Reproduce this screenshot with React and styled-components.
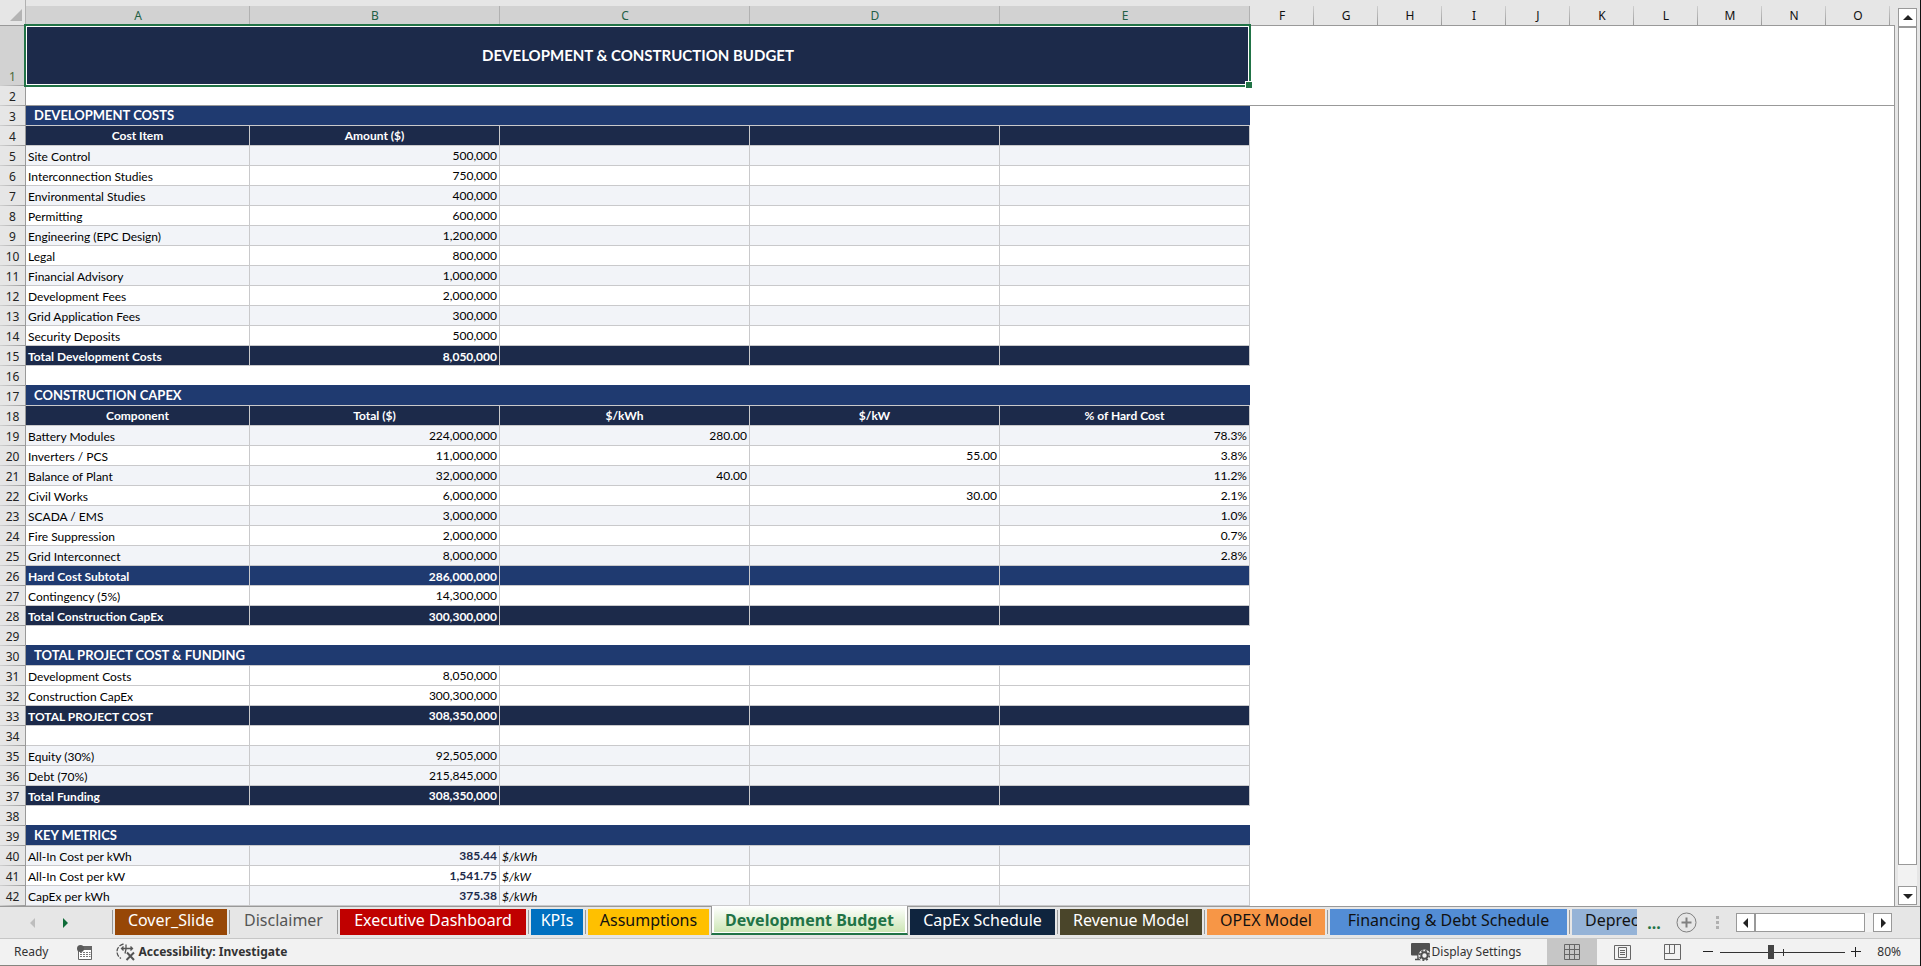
import React, { useState } from 'react';
import styled, { createGlobalStyle, css } from 'styled-components';

const NAVY = '#1c2a4a';
const BLUE = '#1f3a70';
const STRIPE = '#f2f4f8';
const GREEN = '#217346';
const LINE = '#c9c9cb';
const EDGE = '#999999';

const GlobalStyle = createGlobalStyle`
  * {
    box-sizing: border-box;
  }

  body {
    margin: 0;
    background: #e6e6e6;
    color: #222;
    font-family: 'Noto Sans', 'Open Sans', sans-serif;
    font-size: 12px;
  }

  button {
    padding: 0;
    border: none;
    background: transparent;
    color: inherit;
    font: inherit;
    cursor: pointer;
  }
`;

const Window = styled.div`
  display: flex;
  flex-direction: column;
  height: 100vh;
  overflow: hidden;
  border-right: 1px solid #111;
`;

const Workspace = styled.main`
  display: flex;
  flex: 1;
  min-height: 0;
`;

const GridPane = styled.div`
  flex: 1;
  min-width: 0;
  overflow: hidden;
`;

const Sheet = styled.table`
  width: 100%;
  table-layout: fixed;
  border-collapse: separate;
  border-spacing: 0;
`;

const Col = styled.col`
  width: ${props => (props.$width ? `${props.$width}px` : 'auto')};
`;

const HeadCell = styled.th`
  height: 26px;
  padding: 6px 0 0;
  border-bottom: 1px solid ${EDGE};
  background: linear-gradient(to bottom, #cfcfcf, #9b9b9b) right bottom / 1px 19px no-repeat;
  color: #111;
  font-weight: 400;
  line-height: 18px;
  text-align: center;

  ${props => props.$selected && css`
    background:
      linear-gradient(#b1b1b1, #b1b1b1) right bottom / 1px 19px no-repeat,
      linear-gradient(#d2d2d2, #d2d2d2) left bottom / 100% 19px no-repeat;
    color: #235f45;
  `}

  ${props => props.$plain && css`
    background: none;
  `}
`;

const Corner = styled.th`
  height: 26px;
  padding: 5px 3px 0 0;
  border-right: 1px solid #b1b1b1;
  border-bottom: 1px solid ${EDGE};
  line-height: 0;
  text-align: right;
`;

const RowHead = styled.th`
  padding: 0;
  border-right: 1px solid ${EDGE};
  background: linear-gradient(to right, #d0d0d0, #9b9b9b) left bottom / 100% 1px no-repeat
    ${props => (props.$selected ? '#d2d2d2' : '#e6e6e6')};
  color: ${props => (props.$selected ? '#4c6b3a' : '#222')};
  font-weight: 400;
  line-height: 18px;
  text-align: center;
  vertical-align: bottom;
`;

const Row = styled.tr`
  height: ${props => (props.$tall ? '60px' : '20px')};
`;

const fills = {
  head: NAVY,
  total: NAVY,
  subtotal: BLUE,
  stripe: STRIPE,
  plain: '#fff',
};

const Cell = styled.td`
  padding: 0 2px;
  border-right: 1px solid ${LINE};
  border-bottom: 1px solid ${LINE};
  background: ${props => fills[props.$kind]};
  color: ${props => (['head', 'total', 'subtotal'].includes(props.$kind) ? '#fff' : '#000')};
  font-family: Lato, Carlito, sans-serif;
  font-size: 12px;
  font-weight: ${props => (['head', 'total', 'subtotal'].includes(props.$kind) ? 700 : 400)};
  line-height: 17px;
  text-align: ${props => props.$align};
  vertical-align: ${props => (props.$low ? 'bottom' : 'middle')};
  white-space: nowrap;

  ${props => props.$metric && css`
    color: ${NAVY};
    font-weight: 700;
  `}

  ${props => props.$unit && css`
    font-style: italic;
  `}
`;

const TitleCell = styled.td`
  position: relative;
  padding: 0 0 2px;
  background: ${NAVY};
  color: #fff;
  font-family: Lato, Carlito, sans-serif;
  font-size: 15px;
  font-weight: 700;
  line-height: 20px;
  text-align: center;
`;

const Selection = styled.span`
  position: absolute;
  inset: -2px -1px -1px -2px;
  border: 2px solid ${GREEN};
  box-shadow: inset 0 0 0 1px #fff;
  pointer-events: none;

  &::after {
    content: '';
    position: absolute;
    right: -3px;
    bottom: -3px;
    width: 6px;
    height: 6px;
    border: solid #fff;
    border-width: 1px 0 0 1px;
    background: ${GREEN};
  }
`;

const SectionCell = styled.td`
  padding: 0 8px;
  border-bottom: 1px solid ${LINE};
  background: ${BLUE};
  color: #fff;
  font-family: Lato, Carlito, sans-serif;
  font-size: 13px;
  font-weight: 700;
  line-height: 17px;
`;

const GapCell = styled.td`
  padding: 0;
  border-bottom: 1px solid ${props => (props.$frozen ? EDGE : BLUE)};
  background: #fff;
`;

const BlankCell = styled.td`
  padding: 0;
  border-right: 1px solid ${EDGE};
  background: #fff;

  ${props => props.$frozen && css`
    border-bottom: 1px solid ${EDGE};
  `}
`;

const VerticalBar = styled.div`
  display: flex;
  flex-direction: column;
  width: 25px;
  padding: 8px 3px 1px;
`;

const VerticalTrack = styled.div`
  display: flex;
  flex: 1;
  flex-direction: column;
  padding-bottom: 21px;
  background: #f2f2f2;
`;

const ScrollButton = styled.button`
  display: flex;
  align-items: center;
  justify-content: center;
  width: 19px;
  height: 19px;
  border: 1px solid ${EDGE};
  background: #fff;
`;

const Thumb = styled.div`
  flex: 1;
  border: 1px solid ${EDGE};
  background: #fff;
`;

const TabBar = styled.div`
  display: flex;
  align-items: center;
  height: 33px;
  padding-right: 28px;
  border-top: 1px solid ${EDGE};
  border-bottom: 1px solid #c6c6c6;
`;

const TabArrows = styled.div`
  display: flex;
  gap: 18px;
  width: 110px;
  padding-left: 26px;
`;

const ArrowButton = styled.button`
  width: 14px;
  height: 20px;
  line-height: 0;
`;

const Tabs = styled.nav`
  display: flex;
  flex: 1;
  align-self: stretch;
  align-items: flex-start;
  min-width: 0;
  margin-top: -1px;
  overflow: hidden;
`;

const Divider = styled.span`
  flex: none;
  width: 1px;
  height: 24px;
  margin: 4px 2px 0;
  background: ${EDGE};
`;

const Tab = styled.button`
  flex: none;
  width: ${props => props.$width}px;
  height: 26px;
  margin-top: 3px;
  padding-bottom: 4px;
  background: ${props => props.$fill || 'transparent'};
  color: ${props => props.$ink};
  font-size: 16px;
  line-height: 22px;
  white-space: nowrap;

  ${props => props.$active && css`
    height: 29px;
    margin: 0 2px;
    padding: 2px 0;
    border: solid ${EDGE};
    border-width: 0 1px 2px;
    border-bottom-color: ${GREEN};
    background: linear-gradient(#fff, #cde6b5) center top / 191px 26px no-repeat #fff;
    color: ${GREEN};
    font-weight: 700;
  `}
`;

const CutTab = styled(Tab)`
  flex: 1;
  width: auto;
  padding-left: 13px;
  overflow: hidden;
  text-align: left;
`;

const MoreTabs = styled.button`
  width: 34px;
  height: 24px;
  color: ${GREEN};
  font-size: 16px;
  font-weight: 700;
  line-height: 16px;
`;

const AddSheet = styled.button`
  margin: 0 13px 0 5px;
  line-height: 0;
`;

const Grip = styled.span`
  display: grid;
  gap: 2px;
  width: 14px;
  margin-right: 12px;
  justify-content: center;
`;

const GripDot = styled.i`
  width: 3px;
  height: 3px;
  background: #b0b0b0;
`;

const HorizontalBar = styled.div`
  display: flex;
  width: 156px;
  background: #f2f2f2;
`;

const HorizontalTrack = styled.div`
  display: flex;
  flex: 1;
  padding-right: 8px;
`;

const StatusBar = styled.footer`
  display: flex;
  align-items: center;
  height: 27px;
  padding: 0 19px 0 14px;
  border-bottom: 1px solid #85857f;
  background: #f2f2f2;
  color: #333;
  line-height: 18px;
`;

const StatusButton = styled.button`
  display: flex;
  align-items: center;
  gap: 2px;
  margin-left: ${props => props.$gap || 0}px;
  font-weight: ${props => (props.$strong ? 700 : 400)};
`;

const StatusRight = styled.div`
  display: flex;
  align-items: center;
  align-self: stretch;
  margin-left: auto;
`;

const ViewButtons = styled.div`
  display: flex;
  align-self: stretch;
  margin: 0 2px 0 26px;
`;

const ViewButton = styled.button`
  display: flex;
  align-items: center;
  justify-content: center;
  width: 50px;
  background: ${props => (props.$on ? '#c6c6c6' : 'transparent')};
`;

const ZoomStep = styled.button`
  width: 18px;
  height: 18px;
  line-height: 0;
`;

const ZoomTrack = styled.div`
  position: relative;
  display: flex;
  margin: 0 2px 0 3px;

  &::after {
    content: '';
    position: absolute;
    top: 5px;
    left: 50%;
    width: 1px;
    height: 7px;
    background: #333;
  }
`;

const ZoomSlider = styled.input`
  width: 125px;
  height: 16px;
  margin: 0;
  appearance: none;
  background: linear-gradient(#333, #333) center / 100% 1px no-repeat;

  &::-webkit-slider-thumb {
    width: 6px;
    height: 14px;
    appearance: none;
    background: #444;
  }
`;

const ZoomValue = styled.button`
  margin-left: 12px;
`;

const columns = [
  { name: 'A', width: 224, selected: true },
  ...['B', 'C', 'D', 'E'].map(name => ({ name, width: 250, selected: true })),
  ...'FGHIJKLMNO'.split('').map(name => ({ name, width: 64 })),
];

const rows = [
  { kind: 'title', cells: ['DEVELOPMENT & CONSTRUCTION BUDGET'] },
  { kind: 'gap', frozen: true },
  { kind: 'section', cells: ['DEVELOPMENT COSTS'] },
  { kind: 'head', cells: ['Cost Item', 'Amount ($)'] },
  { kind: 'stripe', cells: ['Site Control', '500,000'] },
  { kind: 'plain', cells: ['Interconnection Studies', '750,000'] },
  { kind: 'stripe', cells: ['Environmental Studies', '400,000'] },
  { kind: 'plain', cells: ['Permitting', '600,000'] },
  { kind: 'stripe', cells: ['Engineering (EPC Design)', '1,200,000'] },
  { kind: 'plain', cells: ['Legal', '800,000'] },
  { kind: 'stripe', cells: ['Financial Advisory', '1,000,000'] },
  { kind: 'plain', cells: ['Development Fees', '2,000,000'] },
  { kind: 'stripe', cells: ['Grid Application Fees', '300,000'] },
  { kind: 'plain', cells: ['Security Deposits', '500,000'] },
  { kind: 'total', low: true, cells: ['Total Development Costs', '8,050,000'] },
  { kind: 'gap' },
  { kind: 'section', cells: ['CONSTRUCTION CAPEX'] },
  { kind: 'head', cells: ['Component', 'Total ($)', '$/kWh', '$/kW', '% of Hard Cost'] },
  { kind: 'stripe', cells: ['Battery Modules', '224,000,000', '280.00', '', '78.3%'] },
  { kind: 'plain', cells: ['Inverters / PCS', '11,000,000', '', '55.00', '3.8%'] },
  { kind: 'stripe', cells: ['Balance of Plant', '32,000,000', '40.00', '', '11.2%'] },
  { kind: 'plain', cells: ['Civil Works', '6,000,000', '', '30.00', '2.1%'] },
  { kind: 'stripe', cells: ['SCADA / EMS', '3,000,000', '', '', '1.0%'] },
  { kind: 'plain', cells: ['Fire Suppression', '2,000,000', '', '', '0.7%'] },
  { kind: 'stripe', cells: ['Grid Interconnect', '8,000,000', '', '', '2.8%'] },
  { kind: 'subtotal', low: true, cells: ['Hard Cost Subtotal', '286,000,000'] },
  { kind: 'plain', cells: ['Contingency (5%)', '14,300,000'] },
  { kind: 'total', low: true, cells: ['Total Construction CapEx', '300,300,000'] },
  { kind: 'gap' },
  { kind: 'section', cells: ['TOTAL PROJECT COST & FUNDING'] },
  { kind: 'plain', cells: ['Development Costs', '8,050,000'] },
  { kind: 'plain', cells: ['Construction CapEx', '300,300,000'] },
  { kind: 'total', cells: ['TOTAL PROJECT COST', '308,350,000'] },
  { kind: 'plain', cells: [] },
  { kind: 'stripe', cells: ['Equity (30%)', '92,505,000'] },
  { kind: 'stripe', cells: ['Debt (70%)', '215,845,000'] },
  { kind: 'total', cells: ['Total Funding', '308,350,000'] },
  { kind: 'gap' },
  { kind: 'section', cells: ['KEY METRICS'] },
  { kind: 'stripe', metric: true, cells: ['All-In Cost per kWh', '385.44', '$/kWh'] },
  { kind: 'plain', metric: true, cells: ['All-In Cost per kW', '1,541.75', '$/kW'] },
  { kind: 'stripe', metric: true, cells: ['CapEx per kWh', '375.38', '$/kWh'] },
];

const tabs = [
  { name: 'Cover_Slide', width: 112, fill: '#974706', ink: '#fff' },
  { name: 'Disclaimer', width: 103, ink: '#555' },
  { name: 'Executive Dashboard', width: 186, fill: '#c00000', ink: '#fff' },
  { name: 'KPIs', width: 52, fill: '#0070c0', ink: '#fff' },
  { name: 'Assumptions', width: 121, fill: '#ffc000', ink: '#111' },
  { name: 'Development Budget', width: 197, active: true },
  { name: 'CapEx Schedule', width: 145, fill: '#0f243e', ink: '#fff' },
  { name: 'Revenue Model', width: 142, fill: '#4a452a', ink: '#fff' },
  { name: 'OPEX Model', width: 118, fill: '#f79646', ink: '#111' },
  { name: 'Financing & Debt Schedule', width: 237, fill: '#538dd5', ink: '#111' },
];

const Triangle = ({ points, color = '#222', width = 10, height = 10 }) => (
  <svg width={width} height={height} viewBox={`0 0 ${width} ${height}`} aria-hidden="true">
    <polygon points={points} fill={color} />
  </svg>
);

const MacroIcon = () => (
  <svg width="15" height="15" viewBox="0 0 15 15" aria-hidden="true">
    <path d="M1.5 6v8.5h13v-13H6" fill="#fff" stroke="#666" />
    <path d="M6 1h9v4H6z" fill="#666" />
    <circle cx="3.5" cy="3.5" r="3.5" fill="#5a5a5a" />
    <path d="M3 7.500h2m1 0h2m1 0h2m1 0h1.500M3 9.500h2m1 0h2m1 0h2m1 0h1.500M3 11.500h2m1 0h2m1 0h2m1 0h1.500" stroke="#777" />
  </svg>
);

const AccessibilityIcon = () => (
  <svg width="20" height="18" viewBox="0 0 20 18" fill="none" stroke="#555" aria-hidden="true">
    <path d="M7.500 1C3.500 2 1 5 1 8.500c0 3 1.500 5.500 4 7" strokeWidth="1.300" strokeDasharray="4.500 1.300" />
    <path d="M10 1.500v4.500M5.500 5.500h11M7.500 3.500l-2 2 2 2M14.500 3.500l2 2-2 2M10 6l-1 4.500" strokeWidth="1.300" />
    <path d="M11 9.500l7 7.500M18 9.500L10.500 17" strokeWidth="2" />
  </svg>
);

const DisplayIcon = () => (
  <svg width="19" height="18" viewBox="0 0 19 18" aria-hidden="true">
    <rect x="0" y="0" width="19" height="12.500" rx="1" fill="#505050" />
    <path d="M4 16.500h6M7 12v4" stroke="#505050" strokeWidth="1.500" />
    <circle cx="13.500" cy="12.500" r="6" fill="#f2f2f2" />
    <circle cx="13.500" cy="12.500" r="3.200" fill="none" stroke="#505050" strokeWidth="2" />
    <circle cx="13.500" cy="12.500" r="4.800" fill="none" stroke="#505050" strokeWidth="1.600" strokeDasharray="2 1.770" />
  </svg>
);

const NormalViewIcon = () => (
  <svg width="16" height="16" viewBox="0 0 16 16" fill="none" stroke="#666" aria-hidden="true">
    <path d="M.5.5h15v15H.5zM5.500.5v15M10.500.5v15M.5 5.500h15M.5 10.500h15" />
  </svg>
);

const PageLayoutIcon = () => (
  <svg width="17" height="15" viewBox="0 0 17 15" fill="none" stroke="#666" aria-hidden="true">
    <path d="M.5.5h16v14H.5zM4.500 2.500h8v10h-8zM6 5.500h5M6 7.500h5M6 9.500h5" />
  </svg>
);

const PageBreakIcon = () => (
  <svg width="17" height="16" viewBox="0 0 17 16" fill="none" stroke="#666" aria-hidden="true">
    <path d="M.5.5h16v15H.5zM5.500.5v9M10.500.5v9M.5 9.500h10" />
  </svg>
);

const DataCells = ({ row }) =>
  [0, 1, 2, 3, 4].map(i => {
    const unit = row.metric && i === 2;
    const label = i === 0 || unit;
    let align = label ? 'left' : 'right';
    if (row.kind === 'head') align = 'center';
    return (
      <Cell
        key={i}
        $kind={row.kind}
        $align={align}
        $low={row.low || (label && row.kind !== 'head')}
        $metric={row.metric && i === 1}
        $unit={unit}
      >
        {row.cells[i]}
      </Cell>
    );
  });

const SheetRow = ({ row, number }) => (
  <Row $tall={row.kind === 'title'}>
    <RowHead scope="row" $selected={row.kind === 'title'}>{number}</RowHead>
    {row.kind === 'title' && (
      <TitleCell colSpan={5}>
        {row.cells[0]}
        <Selection />
      </TitleCell>
    )}
    {row.kind === 'section' && <SectionCell colSpan={5}>{row.cells[0]}</SectionCell>}
    {row.kind === 'gap' && <GapCell colSpan={5} $frozen={row.frozen} />}
    {fills[row.kind] && <DataCells row={row} />}
    <BlankCell colSpan={11} $frozen={row.frozen} />
  </Row>
);

const App = () => {
  const [zoom, setZoom] = useState(80);

  return (
    <>
      <GlobalStyle />
      <Window>
        <Workspace>
          <GridPane>
            <Sheet>
              <colgroup>
                <Col $width={26} />
                {columns.map(col => <Col key={col.name} $width={col.width} />)}
                <Col />
              </colgroup>
              <thead>
                <tr>
                  <Corner aria-label="Select all">
                    <Triangle points="12,0 12,12 0,12" color="#b4b4b4" width={12} height={12} />
                  </Corner>
                  {columns.map(col => (
                    <HeadCell key={col.name} scope="col" $selected={col.selected}>{col.name}</HeadCell>
                  ))}
                  <HeadCell $plain />
                </tr>
              </thead>
              <tbody>
                {rows.map((row, i) => <SheetRow key={i} row={row} number={i + 1} />)}
              </tbody>
            </Sheet>
          </GridPane>
          <VerticalBar>
            <ScrollButton aria-label="Scroll up">
              <Triangle points="5,2 10,7 0,7" />
            </ScrollButton>
            <VerticalTrack>
              <Thumb />
            </VerticalTrack>
            <ScrollButton aria-label="Scroll down">
              <Triangle points="0,3 10,3 5,8" />
            </ScrollButton>
          </VerticalBar>
        </Workspace>

        <TabBar>
          <TabArrows>
            <ArrowButton aria-label="Previous sheets">
              <Triangle points="7,0 7,10 2,5" color="#bdbdbd" />
            </ArrowButton>
            <ArrowButton aria-label="Next sheets">
              <Triangle points="3,0 3,10 8,5" color="#0e6b38" />
            </ArrowButton>
          </TabArrows>
          <Tabs aria-label="Sheets">
            <Divider />
            {tabs.map((tab, i) => (
              <React.Fragment key={tab.name}>
                <Tab $width={tab.width} $fill={tab.fill} $ink={tab.ink} $active={tab.active}>
                  {tab.name}
                </Tab>
                {!tab.active && !(tabs[i + 1] && tabs[i + 1].active) && <Divider />}
              </React.Fragment>
            ))}
            <CutTab $fill="#95b3d7" $ink="#111">Deprec</CutTab>
          </Tabs>
          <MoreTabs aria-label="More sheets">...</MoreTabs>
          <AddSheet aria-label="New sheet">
            <svg width="21" height="21" viewBox="0 0 21 21" fill="none" stroke="#808080" aria-hidden="true">
              <circle cx="10.500" cy="10.500" r="9.500" />
              <path d="M5.500 10.500h10M10.500 5.500v10" strokeWidth="2" />
            </svg>
          </AddSheet>
          <Grip>
            <GripDot />
            <GripDot />
            <GripDot />
          </Grip>
          <HorizontalBar>
            <ScrollButton aria-label="Scroll left">
              <Triangle points="7,0 7,10 2,5" />
            </ScrollButton>
            <HorizontalTrack>
              <Thumb />
            </HorizontalTrack>
            <ScrollButton aria-label="Scroll right">
              <Triangle points="3,0 3,10 8,5" />
            </ScrollButton>
          </HorizontalBar>
        </TabBar>

        <StatusBar>
          <span>Ready</span>
          <StatusButton $gap={29} aria-label="Record macro">
            <MacroIcon />
          </StatusButton>
          <StatusButton $gap={24} $strong>
            <AccessibilityIcon />
            Accessibility: Investigate
          </StatusButton>
          <StatusRight>
            <StatusButton>
              <DisplayIcon />
              Display Settings
            </StatusButton>
            <ViewButtons>
              <ViewButton $on aria-label="Normal"><NormalViewIcon /></ViewButton>
              <ViewButton aria-label="Page layout"><PageLayoutIcon /></ViewButton>
              <ViewButton aria-label="Page break preview"><PageBreakIcon /></ViewButton>
            </ViewButtons>
            <ZoomStep aria-label="Zoom out" onClick={() => setZoom(Math.max(10, zoom - 10))}>
              <svg width="10" height="10" viewBox="0 0 10 10" stroke="#222"><path d="M0 4.500h10" /></svg>
            </ZoomStep>
            <ZoomTrack>
              <ZoomSlider
                type="range"
                min="0"
                max="200"
                value={zoom}
                aria-label="Zoom"
                onChange={e => setZoom(Number(e.target.value))}
              />
            </ZoomTrack>
            <ZoomStep aria-label="Zoom in" onClick={() => setZoom(Math.min(200, zoom + 10))}>
              <svg width="10" height="10" viewBox="0 0 10 10" stroke="#222"><path d="M0 4.500h10M4.500 0v10" /></svg>
            </ZoomStep>
            <ZoomValue>{zoom}%</ZoomValue>
          </StatusRight>
        </StatusBar>
      </Window>
    </>
  );
};

export default App;
